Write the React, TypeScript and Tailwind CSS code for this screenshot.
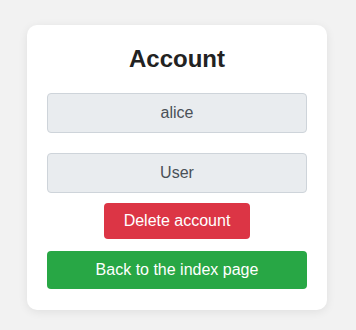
export default function App() {
  return (
    <div className="min-h-[330px] bg-[#f2f2f2] pt-[25px] font-['Liberation_Sans',Arial,sans-serif]">
      <div className="ml-[27px] flex w-[300px] flex-col items-center rounded-[10px] bg-white p-5 pb-[21px] shadow-[0_2px_10px_rgba(0,0,0,0.08)]">
        <h1 className="mb-5 text-center text-2xl leading-[28px] font-bold text-[#222]">Account</h1>

        <div className="flex h-10 w-full items-center justify-center rounded border border-[#ced4da] bg-[#e9ecef] text-base text-[#495057]">
          alice
        </div>

        <div className="mt-5 flex h-10 w-full items-center justify-center rounded border border-[#ced4da] bg-[#e9ecef] text-base text-[#495057]">
          User
        </div>

        <button className="mt-[10px] h-9 w-[146px] rounded bg-[#dc3545] text-base text-white">
          Delete account
        </button>

        <button className="mt-3 h-[38px] w-full rounded bg-[#28a745] text-base text-white">
          Back to the index page
        </button>
      </div>
    </div>
  );
}
